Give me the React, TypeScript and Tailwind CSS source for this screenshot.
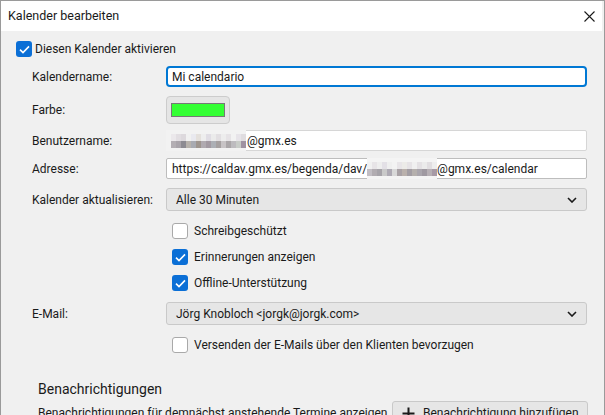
import React from 'react';

const font = { fontFamily: 'Roboto, "Noto Sans", sans-serif' };

const Check = ({ checked }: { checked: boolean }) =>
  checked ? (
    <span className="flex h-[16px] w-[16px] shrink-0 items-center justify-center rounded-[3px] bg-[#0b6fd6]">
      <svg width="11" height="9" viewBox="0 0 11 9" fill="none">
        <path d="M1 4.6 L4 7.6 L10 1.4" stroke="white" strokeWidth="1.6" />
      </svg>
    </span>
  ) : (
    <span className="h-[16px] w-[16px] shrink-0 rounded-[3px] border border-[#a9a9a9] bg-white" />
  );

const Chevron = () => (
  <svg width="10" height="6" viewBox="0 0 10 6" fill="none">
    <path d="M1 1 L5 5 L9 1" stroke="#1a1a1a" strokeWidth="1.6" />
  </svg>
);

// pixelated patches that hide the account name
const Blur = ({ cells, lower }: { cells: string[]; lower: string[] }) => (
  <span className="flex flex-col">
    <span className="flex">
      {cells.map((c, i) => (
        <span key={i} className="h-[7px] w-[5px]" style={{ background: c }} />
      ))}
    </span>
    <span className="flex">
      {lower.map((c, i) => (
        <span key={i} className="h-[7px] w-[5px]" style={{ background: c }} />
      ))}
    </span>
  </span>
);

const userTop = ['#ebe8eb', '#e2dee2', '#ddd9dd', '#f1f1f1', '#e9e9ef', '#e4e0dc', '#eeeeee', '#e0dde4', '#ebebeb', '#e2dfe2', '#ededed', '#e6e3e6', '#f2f2f2', '#e7e4e9', '#dfdcdf'];
const userLow = ['#b3aeb3', '#a9a4aa', '#8d8b92', '#b7b2ac', '#a8aab1', '#9e958e', '#b0aab0', '#a39aa2', '#acafb5', '#a5a0a0', '#c7c3c5', '#aaa6a8', '#bdbbbf', '#c8ccc8', '#9f92a2'];
const adrTop = ['#f1f1f1', '#e7e4e7', '#eeeeee', '#e3e0e6', '#efefef', '#f3f3f3', '#e8e5e8', '#ecebe8', '#e6e3e6', '#f0f0f0', '#e4e1e4', '#ebebeb', '#e1dee1', '#eeeeee'];
const adrLow = ['#c2bec4', '#b1acb1', '#a6a3a9', '#c9c9c9', '#aeaab4', '#d8d8d8', '#a9a2a6', '#bab1ac', '#a39ea4', '#b5b0ad', '#aaa6ad', '#9f99a1', '#b7b0b5', '#a79aa6'];

const Label = ({ children }: { children: React.ReactNode }) => (
  <span className="w-[134px] shrink-0 whitespace-nowrap text-[12px] text-[#1a1a1a]">{children}</span>
);

export default function App() {
  return (
    <div
      className="relative flex h-[415px] w-[605px] flex-col overflow-hidden border-t border-r border-l border-[#9a9a9a] bg-[#f0f0f0] pr-[2px]"
      style={font}
    >
      <div className="flex h-[30px] shrink-0 items-center justify-between bg-white pl-[7px] pr-[7px]">
        <span className="text-[12.5px] text-[#1a1a1a]">Kalender bearbeiten</span>
        <svg width="11" height="11" viewBox="0 0 11 11" fill="none">
          <path d="M0.5 0.5 L10.5 10.5 M10.5 0.5 L0.5 10.5" stroke="#1a1a1a" strokeWidth="1.1" />
        </svg>
      </div>

      <div className="flex flex-col pl-[15px]">
        <label className="mt-[10px] flex h-[16px] items-center gap-[3px]">
          <Check checked />
          <span className="text-[12px] text-[#1a1a1a]">Diesen Kalender aktivieren</span>
        </label>

        <div className="flex flex-col pl-[16px]">
          <div className="mt-[9px] flex h-[21px] items-center">
            <Label>Kalendername:</Label>
            <div className="flex h-[21px] w-[421px] items-center rounded-[4px] border-2 border-[#0078d4] bg-white pl-[4px] text-[12px] text-[#1a1a1a]">
              Mi calendario
            </div>
          </div>

          <div className="mt-[9px] flex h-[28px] items-center">
            <Label>Farbe:</Label>
            <button className="flex h-[28px] w-[64px] items-center justify-center rounded-[4px] border border-[#cccccc] bg-[#e5e5e5]">
              <span className="h-[14px] w-[54px] border border-[#777777] bg-[#33ff33]" />
            </button>
          </div>

          <div className="mt-[6px] flex h-[21px] items-center">
            <Label>Benutzername:</Label>
            <div className="flex h-[21px] w-[421px] items-center rounded-[2px] border border-[#d6d6d6] bg-white text-[12px] text-[#1a1a1a]">
              <span className="-ml-[1px] flex h-[21px] items-center bg-[#f2f2f2] pl-[5px]">
                <Blur cells={userTop} lower={userLow} />
              </span>
              <span className="pl-[1px]">@gmx.es</span>
            </div>
          </div>

          <div className="mt-[7px] flex h-[21px] items-center">
            <Label>Adresse:</Label>
            <div className="flex h-[21px] w-[421px] items-center rounded-[2px] border border-[#bdbdbd] bg-white pl-[5px] text-[12px] text-[#1a1a1a]">
              <span>https://caldav.gmx.es/begenda/dav/</span>
              <span className="flex h-[21px] items-center bg-[#f4f4f4]">
                <Blur cells={adrTop} lower={adrLow} />
              </span>
              <span>@gmx.es/calendar</span>
            </div>
          </div>

          <div className="mt-[9px] flex h-[23px] items-center">
            <Label>Kalender aktualisieren:</Label>
            <div className="flex h-[23px] w-[421px] items-center justify-between rounded-[3px] border border-[#c9c9c9] bg-[#e6e6e6] pl-[9px] pr-[9px] text-[12px] text-[#1a1a1a]">
              <span>Alle 30 Minuten</span>
              <Chevron />
            </div>
          </div>

          <div className="flex flex-col pl-[140px]">
            <label className="mt-[12px] flex h-[16px] items-center gap-[6px]">
              <Check checked={false} />
              <span className="text-[12px] text-[#1a1a1a]">Schreibgeschützt</span>
            </label>
            <label className="mt-[10px] flex h-[16px] items-center gap-[6px]">
              <Check checked />
              <span className="text-[12px] text-[#1a1a1a]">Erinnerungen anzeigen</span>
            </label>
            <label className="mt-[10px] flex h-[16px] items-center gap-[6px]">
              <Check checked />
              <span className="text-[12px] text-[#1a1a1a]">Offline-Unterstützung</span>
            </label>
          </div>

          <div className="mt-[11px] flex h-[23px] items-center">
            <Label>E-Mail:</Label>
            <div className="flex h-[23px] w-[421px] items-center justify-between rounded-[3px] border border-[#c9c9c9] bg-[#e6e6e6] pl-[9px] pr-[9px] text-[12px] text-[#1a1a1a]">
              <span>Jörg Knobloch &lt;jorgk@jorgk.com&gt;</span>
              <Chevron />
            </div>
          </div>

          <label className="mt-[12px] flex h-[16px] items-center gap-[6px] pl-[140px]">
            <Check checked={false} />
            <span className="text-[12px] text-[#1a1a1a]">Versenden der E-Mails über den Klienten bevorzugen</span>
          </label>
        </div>

        <div className="flex flex-col pl-[22px]">
          <div className="mt-[28px] flex h-[16px] items-center text-[14px] text-[#1a1a1a]">Benachrichtigungen</div>
          <div className="mt-[4px] flex h-[26px] items-start justify-between pr-[14px]">
            <span className="whitespace-nowrap pt-[5px] text-[12px] leading-[14px] text-[#1a1a1a]">
              Benachrichtigungen für demnächst anstehende Termine anzeigen
            </span>
            <button className="flex h-[26px] w-[196px] shrink-0 items-start gap-[8px] whitespace-nowrap rounded-[3px] border border-[#c9c9c9] bg-[#e6e6e6] pl-[9px] pt-[4px] text-[12px] leading-[14px] text-[#1a1a1a]">
              <svg width="13" height="13" viewBox="0 0 13 13" fill="none" className="mt-[1px]">
                <path d="M6.5 0.5 V12.5 M0.5 6.5 H12.5" stroke="#1a1a1a" strokeWidth="2" />
              </svg>
              <span>Benachrichtigung hinzufügen</span>
            </button>
          </div>
        </div>
      </div>
    </div>
  );
}
